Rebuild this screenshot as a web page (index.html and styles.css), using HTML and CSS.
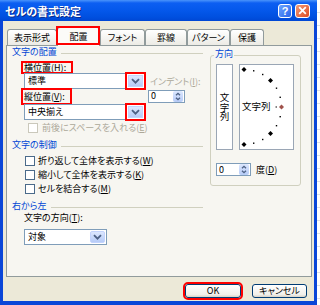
FILE: index.html
```html
<!DOCTYPE html>
<html lang="ja">
<head>
<meta charset="utf-8">
<title>セルの書式設定</title>
<link rel="stylesheet" href="styles.css">
</head>
<body>
<div class="window">
  <div class="titlebar">
    <span class="title">セルの書式設定</span>
    <span class="tb-btn help">?</span>
    <span class="tb-btn close"><svg width="9" height="9" viewBox="0 0 9 9"><path d="M1.2 1.2L7.8 7.8M7.8 1.2L1.2 7.8" stroke="#fff" stroke-width="1.8" fill="none"/></svg></span>
  </div>
  <div class="client">
    <div class="tabs">
      <div class="tab t1">表示形式</div>
      <div class="tab sel t2">配置</div>
      <div class="tab t3">フォント</div>
      <div class="tab t4">罫線</div>
      <div class="tab t5">パターン</div>
      <div class="tab t6">保護</div>
    </div>
    <div class="panel">
      <div class="left">
        <div class="hdr"><span>文字の配置</span></div>
        <div class="lbl mt4"><span class="red-lbl">横位置(<u>H</u>):</span></div>
        <div class="row r1">
          <div class="select w121"><span class="val">標準</span><span class="dd red"><svg width="15" height="12" viewBox="0 0 15 12"><path d="M4 4.2L7.5 7.7L11 4.2" stroke="#4d6185" stroke-width="1.8" fill="none"/></svg></span></div>
          <span class="dis indent">インデント(<u>I</u>):</span>
        </div>
        <div class="row r2">
          <div class="lblbox"><span class="red-lbl">縦位置(<u>V</u>):</span></div>
          <div class="spin w37"><span class="val">0</span><span class="spin-btn"><svg width="10" height="11" viewBox="0 0 10 11"><path d="M3 4.3L5 2.3L7 4.3M3 6.7L5 8.7L7 6.7" stroke="#4d6185" stroke-width="1.3" fill="none"/></svg></span></div>
        </div>
        <div class="select w121 ml17 mt1"><span class="val">中央揃え</span><span class="dd red"><svg width="15" height="12" viewBox="0 0 15 12"><path d="M4 4.2L7.5 7.7L11 4.2" stroke="#4d6185" stroke-width="1.8" fill="none"/></svg></span></div>
        <div class="cbrow dis-row mt3"><span class="cb cb-dis"></span><span class="cbtext">前後にスペースを入れる(<u>E</u>)</span></div>
        <div class="hdr mt6"><span>文字の制御</span></div>
        <div class="cbrow mt5"><span class="cb"></span><span class="cbtext">折り返して全体を表示する(<u>W</u>)</span></div>
        <div class="cbrow mt4"><span class="cb"></span><span class="cbtext">縮小して全体を表示する(<u>K</u>)</span></div>
        <div class="cbrow mt4"><span class="cb"></span><span class="cbtext">セルを結合する(<u>M</u>)</span></div>
        <div class="hdr mt6"><span>右から左</span></div>
        <div class="lbl2 mt1">文字の方向(<u>T</u>):</div>
        <div class="select w83 ml17 mt6"><span class="val">対象</span><span class="dd"><svg width="15" height="12" viewBox="0 0 15 12"><path d="M4 4.2L7.5 7.7L11 4.2" stroke="#4d6185" stroke-width="1.8" fill="none"/></svg></span></div>
      </div>
      <div class="group">
        <span class="legend">方向</span>
        <div class="dir">
          <div class="vbox"><span class="vtext">文字列</span></div>
          <div class="hbox">
            <svg class="dial" width="53" height="84" viewBox="0 0 53 84">
              <g fill="#000">
                <polygon points="4,2 6.5,4.5 4,7 1.5,4.5"/>
                <polygon points="30.5,13 33,15.5 30.5,18 28,15.5"/>
                <polygon points="30.5,66 33,68.5 30.5,71 28,68.5"/>
                <polygon points="4,77 6.5,79.5 4,82 1.5,79.5"/>
                <rect x="13" y="5.1" width="1.4" height="1.4"/>
                <rect x="22" y="8.8" width="1.4" height="1.4"/>
                <rect x="35.8" y="22.5" width="1.4" height="1.4"/>
                <rect x="39.5" y="31.6" width="1.4" height="1.4"/>
                <rect x="39.5" y="51" width="1.4" height="1.4"/>
                <rect x="35.8" y="60" width="1.4" height="1.4"/>
                <rect x="22" y="73.8" width="1.4" height="1.4"/>
                <rect x="13" y="77.5" width="1.4" height="1.4"/>
                <rect x="35.6" y="41.4" width="1.2" height="1.2"/>
              </g>
              <polygon points="41.5,39.5 44,42 41.5,44.5 39,42" fill="#a0524b"/>
              <text x="2" y="45.3" class="dial-text">文字列</text>
            </svg>
          </div>
        </div>
        <div class="sprow">
          <div class="spin w35"><span class="val">0</span><span class="spin-btn"><svg width="10" height="11" viewBox="0 0 10 11"><path d="M3 4.3L5 2.3L7 4.3M3 6.7L5 8.7L7 6.7" stroke="#4d6185" stroke-width="1.3" fill="none"/></svg></span></div>
          <span class="deg">度(<u>D</u>)</span>
        </div>
      </div>
    </div>
    <div class="buttons">
      <div class="btn ok">OK</div>
      <div class="btn cancel">キャンセル</div>
    </div>
  </div>
</div>
</body>
</html>
```

FILE: styles.css
```css
* { box-sizing: border-box; }
html, body { margin: 0; padding: 0; }
body {
  width: 320px;
  height: 305px;
  overflow: hidden;
  background: repeating-linear-gradient(180deg, #ffffff 0 12px, #dde1e8 12px 13px);
  font-family: "Noto Sans CJK JP", "Noto Sans", sans-serif;
  font-size: 9px;
  color: #000;
  font-feature-settings: "palt";
}
u { text-decoration-thickness: 1px; text-underline-offset: 1px; }

.window {
  width: 317px;
  height: 305px;
  display: flex;
  flex-direction: column;
  background: #0a46d8;
}
.titlebar {
  height: 21px;
  flex: none;
  display: flex;
  align-items: center;
  padding: 0 7px 0 5px;
  background: linear-gradient(180deg, #4a94fb 0, #0c5ff2 3px, #0559ec 45%, #0050e0 80%, #0047d4 100%);
}
.title {
  flex: 1;
  color: #fff;
  font-weight: bold;
  font-size: 11px;
  line-height: 12px;
  text-shadow: 1px 1px 0 #0b2a8a;
}
.tb-btn {
  width: 14px;
  height: 14px;
  border: 1px solid #fff;
  border-radius: 3px;
  display: flex;
  align-items: center;
  justify-content: center;
}
.help {
  margin-right: 3px;
  background: linear-gradient(135deg, #6ba5ff, #2a64ea);
  color: #fff;
  font-weight: bold;
  font-size: 11px;
  line-height: 12px;
  font-family: "Liberation Sans", sans-serif;
}
.close {
  width: 15px;
  background: linear-gradient(135deg, #f29a78, #de4c22);
}

.client {
  flex: 1;
  margin: 0 3px 4px 3px;
  background: #ece9d8;
  display: flex;
  flex-direction: column;
}
.tabs {
  flex: none;
  margin-top: 6px;
  height: 18px;
  padding-left: 4px;
  display: flex;
  align-items: flex-end;
}
.tab {
  height: 16px;
  border: 1px solid #919b9c;
  border-bottom: none;
  border-radius: 3px 3px 0 0;
  background: linear-gradient(180deg, #ffffff, #ecebe5);
  display: flex;
  align-items: center;
  justify-content: center;
  line-height: 10px;
}
.tab.sel {
  height: 19px;
  margin-bottom: -1px;
  position: relative;
  z-index: 1;
  background: #fbfbf8;
}
.tab.sel::after {
  content: "";
  position: absolute;
  top: -2px;
  left: -2px;
  right: -1px;
  bottom: 1px;
  border: 2px solid #f00;
}
.t1 { width: 50px; }
.t2 { width: 43px; }
.t3 { width: 45px; }
.t4 { width: 42px; }
.t5 { width: 43px; }
.t6 { width: 34px; }

.panel {
  flex: none;
  margin: 0 2px 0 3px;
  height: 232px;
  border: 1px solid #919b9c;
  background: #f7f6f1;
  display: flex;
}
.left {
  width: 196px;
  display: flex;
  flex-direction: column;
}
.hdr {
  height: 12px;
  line-height: 12px;
  padding-left: 5px;
  display: flex;
  align-items: center;
  color: #0046d5;
}
.hdr::after {
  content: "";
  flex: 1;
  height: 0;
  margin: 3px 0 0 4px;
  border-top: 1px solid #d0d0bf;
}
.lbl {
  height: 11px;
  padding-left: 16px;
  display: flex;
  align-items: center;
}
.red-lbl {
  padding: 0 5px 0 1px;
  line-height: 9px;
  outline: 2px solid #f00;
}
.lbl2 {
  height: 10px;
  line-height: 10px;
  padding-left: 17px;
}
.row {
  display: flex;
  align-items: center;
  padding-left: 17px;
}
.r1 { height: 16px; }
.r2 { height: 14px; padding-left: 16px; }
.lblbox { width: 125px; }
.indent { margin-left: 5px; }
.dis { color: #aca899; }

.select {
  height: 16px;
  border: 1px solid #7f9db9;
  background: #fff;
  display: flex;
  align-items: center;
  padding: 0 1px 0 3px;
  line-height: 10px;
}
.val { flex: 1; }
.dd {
  width: 15px;
  height: 12px;
  border: 1px solid #c3d3fd;
  border-radius: 2px;
  background: linear-gradient(180deg, #dce7fe, #b6cbf7);
  display: flex;
}
.dd svg { display: block; margin: -1px; }
.dd.red { border-radius: 0; outline: 2px solid #f00; outline-offset: 1px; }
.w121 { width: 121px; }
.w83 { width: 83px; }
.w37 { width: 37px; }
.w35 { width: 35px; }
.ml17 { margin-left: 17px; }

.spin {
  height: 13px;
  border: 1px solid #7f9db9;
  background: #fff;
  display: flex;
  align-items: center;
  padding: 0 1px 0 2px;
  line-height: 10px;
}
.spin-btn {
  width: 10px;
  height: 11px;
  border-radius: 2px;
  background: linear-gradient(180deg, #dce7fe, #b6cbf7);
  display: flex;
}
.spin-btn svg { display: block; }

.cbrow {
  height: 10px;
  display: flex;
  align-items: center;
  padding-left: 18px;
  line-height: 10px;
}
.cb {
  width: 10px;
  height: 10px;
  border: 1px solid #4a6a8a;
  background: #fff;
  flex: none;
}
.cbtext { margin-left: 3px; }
.dis-row { padding-left: 21px; color: #aca899; }
.cb-dis { border-color: #cac8bb; }
.dis-row .cbtext { margin-left: 4px; }

.mt1 { margin-top: 1px; }
.mt3 { margin-top: 3px; }
.mt4 { margin-top: 4px; }
.mt5 { margin-top: 5px; }
.mt6 { margin-top: 6px; }

.group {
  margin: 9px 0 0 7px;
  width: 91px;
  height: 131px;
  border: 1px solid #d0d0bf;
  border-radius: 3px;
  display: flex;
  flex-direction: column;
}
.legend {
  align-self: flex-start;
  margin: -7px 0 0 3px;
  padding: 0 1px;
  height: 10px;
  line-height: 10px;
  background: #f7f6f1;
  color: #0046d5;
}
.dir {
  display: flex;
  gap: 6px;
  margin: 5px 0 0 5px;
}
.vbox {
  width: 17px;
  height: 86px;
  border: 1px solid #9aa6b5;
  background: #fff;
  display: flex;
  align-items: center;
  justify-content: center;
}
.vtext {
  writing-mode: vertical-rl;
  text-orientation: upright;
  line-height: 10px;
  font-size: 9.5px;
  font-feature-settings: normal;
}
.hbox {
  width: 55px;
  height: 86px;
  border: 1px solid #9aa6b5;
  background: #fff;
}
.dial { display: block; }
.dial-text {
  font-family: "Noto Sans CJK JP", sans-serif;
  font-size: 9.5px;
  fill: #000;
}
.sprow {
  display: flex;
  align-items: center;
  margin: 13px 0 0 5px;
}
.deg { margin-left: 5px; line-height: 10px; }

.buttons {
  display: flex;
  justify-content: flex-end;
  gap: 11px;
  padding-right: 7px;
  margin-top: 7px;
}
.btn {
  height: 14px;
  border: 1px solid #003c74;
  border-radius: 3px;
  background: linear-gradient(180deg, #ffffff, #f0efea 80%, #d8d2c6);
  display: flex;
  align-items: center;
  justify-content: center;
  line-height: 10px;
}
.ok { width: 56px; outline: 2px solid #f00; }
.cancel { width: 55px; }
```
